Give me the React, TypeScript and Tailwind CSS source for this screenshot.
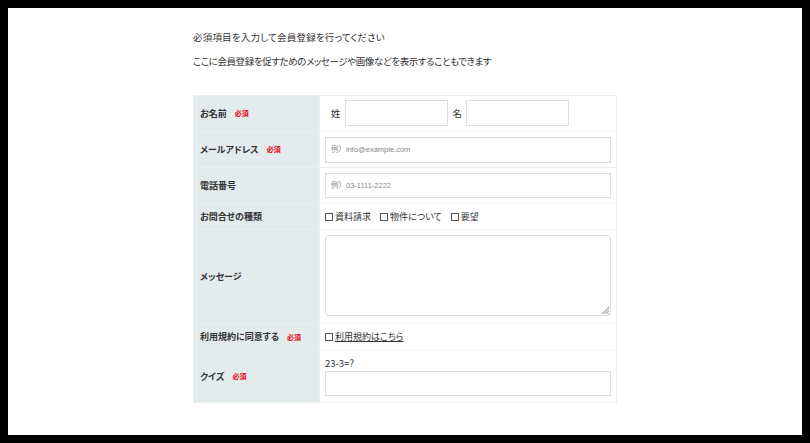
import React from "react";

const font = { fontFamily: '"Noto Sans CJK JP", "Noto Sans", sans-serif' };
const ph = { fontFamily: '"Liberation Sans", "Noto Sans CJK JP", sans-serif' };

function Req() {
  return <span className="ml-[8px] text-[7px] font-bold text-[#e60012] leading-none">必須</span>;
}

function Label({ children, req }: { children: React.ReactNode; req?: boolean }) {
  return (
    <div className="flex items-center bg-[#e4ebed] pl-[6px] text-[9px] font-bold text-[#333] border-r border-[#eeeeee]">
      {children}
      {req && <Req />}
    </div>
  );
}

function Check({ children }: { children: React.ReactNode }) {
  return (
    <span className="flex items-center gap-[2px]">
      <span className="inline-block w-[8px] h-[8px] border border-[#555] bg-white" />
      {children}
    </span>
  );
}

export default function App() {
  return (
    <div className="w-[810px] h-[443px] bg-black p-[8px] [font-feature-settings:'palt']" style={font}>
      <div className="w-[794px] h-[427px] bg-white flex flex-col items-center">
        <div className="w-[424px] text-[9.5px] text-[#333] pt-[23px]">
          <p className="leading-[12px] tracking-[0.2px]">必須項目を入力して会員登録を行ってください</p>
          <p className="leading-[12px] mt-[12px] tracking-[-0.4px]">ここに会員登録を促すためのメッセージや画像などを表示することもできます</p>
        </div>
        <div className="w-[424px] mt-[28px] border border-[#eeeeee] text-[#333]">
          <div className="grid grid-cols-[126px_1fr] border-b border-[#eeeeee]">
            <Label req>お名前</Label>
            <div className="flex items-center pt-[4px] pb-[5px] pl-[11px] text-[9.5px]">
              <span>姓</span>
              <div className="ml-[4px] w-[103px] h-[26px] border border-[#dddddd]" />
              <span className="ml-[5px]">名</span>
              <div className="ml-[4px] w-[103px] h-[26px] border border-[#dddddd]" />
            </div>
          </div>
          <div className="grid grid-cols-[126px_1fr] border-b border-[#eeeeee]">
            <Label req>メールアドレス</Label>
            <div className="pt-[5px] pb-[4px] px-[5px]">
              <div className="h-[26px] border border-[#dddddd] flex items-center pl-[5px] text-[7.5px] text-[#888] [font-feature-settings:normal]" style={ph}>例）info@example.com</div>
            </div>
          </div>
          <div className="grid grid-cols-[126px_1fr] border-b border-[#eeeeee]">
            <Label>電話番号</Label>
            <div className="py-[5px] px-[5px]">
              <div className="h-[25px] border border-[#dddddd] flex items-center pl-[5px] text-[7.5px] text-[#888] [font-feature-settings:normal]" style={ph}>例）03-1111-2222</div>
            </div>
          </div>
          <div className="grid grid-cols-[126px_1fr] border-b border-[#eeeeee]">
            <Label>お問合せの種類</Label>
            <div className="h-[25px] flex items-center pl-[5px] gap-[9px] text-[9px]">
              <Check>資料請求</Check>
              <Check>物件について</Check>
              <Check>要望</Check>
            </div>
          </div>
          <div className="grid grid-cols-[126px_1fr] border-b border-[#eeeeee]">
            <Label>メッセージ</Label>
            <div className="pt-[5px] pb-[7px] px-[5px]">
              <div className="relative h-[81px] border border-[#dddddd] rounded-[4px]">
                <svg className="absolute right-[1px] bottom-[1px]" width="8" height="8" viewBox="0 0 8 8">
                  <path d="M8 0 L8 8 L0 8 Z" fill="#bbb" />
                  <path d="M8 3 L3 8 M8 6 L6 8" stroke="#fff" strokeWidth="0.8" />
                </svg>
              </div>
            </div>
          </div>
          <div className="grid grid-cols-[126px_1fr] border-b border-[#eeeeee]">
            <Label req>利用規約に同意する</Label>
            <div className="h-[26px] flex items-center pl-[5px] text-[9px]">
              <Check><span className="underline">利用規約はこちら</span></Check>
            </div>
          </div>
          <div className="grid grid-cols-[126px_1fr]">
            <Label req>クイズ</Label>
            <div className="pt-[6px] pb-[6px] px-[5px]">
              <div className="text-[9.5px] leading-[12px] mb-[2px]">23-3=?</div>
              <div className="h-[25px] border border-[#dddddd]" />
            </div>
          </div>
        </div>
      </div>
    </div>
  );
}
